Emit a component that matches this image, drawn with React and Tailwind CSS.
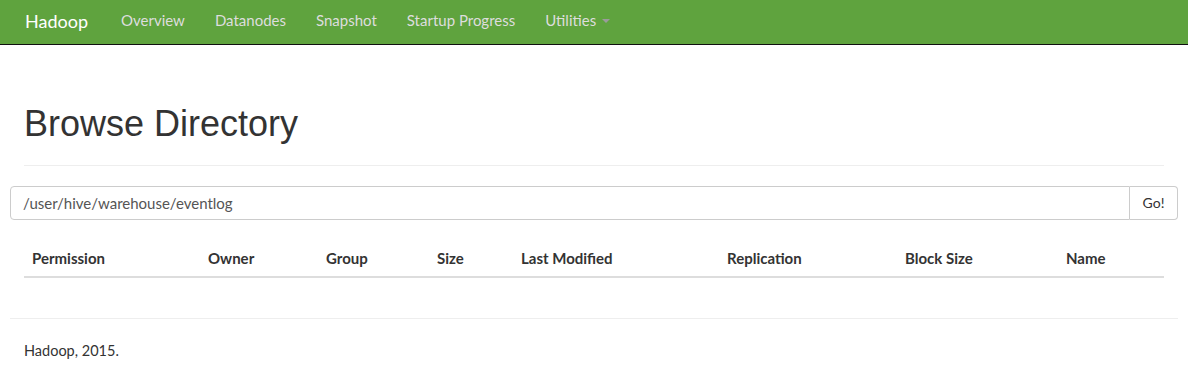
import React from "react";

const navLinks = ["Overview", "Datanodes", "Snapshot", "Startup Progress"];

const columns = [
  { label: "Permission", w: "w-[176px]" },
  { label: "Owner", w: "w-[118px]" },
  { label: "Group", w: "w-[111px]" },
  { label: "Size", w: "w-[84px]" },
  { label: "Last Modified", w: "w-[206px]" },
  { label: "Replication", w: "w-[178px]" },
  { label: "Block Size", w: "w-[161px]" },
  { label: "Name", w: "flex-1" },
];

const App = () => {
  return (
    <div className="min-h-[374px] bg-white text-[#333] font-['Lato',sans-serif]">
      {/* Navbar */}
      <nav className="h-[45px] pb-[3px] bg-[#5fa33e] border-b border-[#101010] flex items-center">
        <span className="ml-[25px] mr-[18px] text-[18px] text-white leading-none">Hadoop</span>
        {navLinks.map((l) => (
          <a key={l} className="px-[15px] text-[15px] text-[#dddddd] leading-none">
            {l}
          </a>
        ))}
        <a className="px-[15px] text-[15px] text-[#dddddd] leading-none flex items-center">
          Utilities
          <span className="ml-[6px] inline-block w-0 h-0 border-x-[4px] border-x-transparent border-t-[4px] border-t-[#9b9b9b]"></span>
        </a>
      </nav>

      {/* Page header */}
      <div className="px-[24px]">
        <h1 className="mt-[59px] pb-[21px] border-b border-[#eeeeee] text-[36px] leading-[1.1] font-['Liberation_Sans',sans-serif] text-[#333]">
          Browse Directory
        </h1>
      </div>

      {/* Path input */}
      <div className="mt-[20px] ml-[10px] mr-[10px] flex h-[34px]">
        <input
          className="flex-1 h-full border border-[#cccccc] rounded-l-[4px] px-[12px] text-[15px] text-[#555] outline-none"
          defaultValue="/user/hive/warehouse/eventlog"
        />
        <button className="h-full w-[48px] border border-l-0 border-[#cccccc] rounded-r-[4px] text-[14px] text-[#333] bg-white">
          Go!
        </button>
      </div>

      {/* Table header */}
      <div className="mx-[24px] mt-[20px] flex border-b-2 border-[#dddddd]">
        {columns.map((c) => (
          <div key={c.label} className={`${c.w} px-[8px] py-[8px] text-[15px] font-bold leading-[20px]`}>
            {c.label}
          </div>
        ))}
      </div>

      {/* Footer */}
      <div className="mt-[40px] mx-[10px] border-t border-[#eeeeee]"></div>
      <p className="px-[24px] pt-[21px] text-[14.5px]">Hadoop, 2015.</p>
    </div>
  );
};

export default App;
